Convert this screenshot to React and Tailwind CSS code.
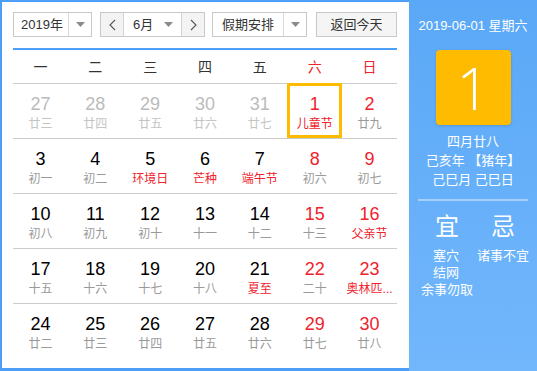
import React from "react";

const RED = "text-[#f0222c]";

const weeks = [
  [
    ["27", "廿三", "o"], ["28", "廿四", "o"], ["29", "廿五", "o"], ["30", "廿六", "o"], ["31", "廿七", "o"],
    ["1", "儿童节", "rf", true], ["2", "廿九", "r"],
  ],
  [
    ["3", "初一"], ["4", "初二"], ["5", "环境日", "f"], ["6", "芒种", "f"], ["7", "端午节", "f"],
    ["8", "初六", "r"], ["9", "初七", "r"],
  ],
  [
    ["10", "初八"], ["11", "初九"], ["12", "初十"], ["13", "十一"], ["14", "十二"],
    ["15", "十三", "r"], ["16", "父亲节", "rf"],
  ],
  [
    ["17", "十五"], ["18", "十六"], ["19", "十七"], ["20", "十八"], ["21", "夏至", "f"],
    ["22", "二十", "r"], ["23", "奥林匹...", "rf"],
  ],
  [
    ["24", "廿二"], ["25", "廿三"], ["26", "廿四"], ["27", "廿五"], ["28", "廿六"],
    ["29", "廿七", "r"], ["30", "廿八", "r"],
  ],
];

function Arrow() {
  return (
    <svg width="9" height="5" viewBox="0 0 9 5">
      <path d="M0 0 L9 0 L4.5 5 Z" fill="#8a8a8a" />
    </svg>
  );
}

function Chevron({ dir }) {
  return (
    <svg width="7" height="12" viewBox="0 0 7 12">
      <path
        d={dir === "l" ? "M6 1 L1 6 L6 11" : "M1 1 L6 6 L1 11"}
        fill="none"
        stroke="#555"
        strokeWidth="1.1"
      />
    </svg>
  );
}

function Cell({ d }) {
  const [num, lunar, kind = "", sel] = d;
  const other = kind.includes("o");
  const red = kind.includes("r");
  const fest = kind.includes("f");
  const numCls = other ? "text-[#bbbbbb]" : red ? RED : "text-black";
  const lunCls = other ? "text-[#c4c4c4]" : fest ? RED : "text-[#9a9a9a]";
  return (
    <div className="relative flex flex-col items-center pt-[10px] h-[54px]">
      {sel && (
        <div className="absolute -top-px left-0 right-0 bottom-0 border-[3px] border-[#ffbb00]" />
      )}
      <div className={`text-[18px] leading-[20px] ${numCls}`}>{num}</div>
      <div className={`text-[12px] leading-[16px] mt-[2px] whitespace-nowrap ${lunCls}`}>{lunar}</div>
    </div>
  );
}

export default function App() {
  return (
    <div
      className="w-[537px] h-[371px] flex overflow-hidden bg-white"
      style={{ fontFamily: '"Liberation Sans", "Noto Sans CJK SC", sans-serif' }}
    >
      <div className="w-[409px] h-full border-l-2 border-t-2 border-b-[3px] border-[#4d9ef6] pl-[11px] pr-[12px] pt-[10px] flex flex-col">
        {/* controls */}
        <div className="flex items-center h-[25px] text-[13px] text-[#333]">
          <div className="flex h-[25px] w-[79px] border border-[#c8c8c8]">
            <div className="flex-1 flex items-center pl-[7px]">2019年</div>
            <div className="w-[23px] border-l border-[#d8d8d8] flex items-center justify-center">
              <Arrow />
            </div>
          </div>
          <div className="flex h-[25px] w-[105px] border border-[#c8c8c8] ml-[8px]">
            <div className="w-[23px] bg-[#f3f3f3] border-r border-[#d4d4d4] flex items-center justify-center">
              <Chevron dir="l" />
            </div>
            <div className="flex-1 flex items-center justify-between pl-[9px] pr-[8px]">
              <span>6月</span>
              <Arrow />
            </div>
            <div className="w-[23px] bg-[#f3f3f3] border-l border-[#d4d4d4] flex items-center justify-center">
              <Chevron dir="r" />
            </div>
          </div>
          <div className="flex h-[25px] w-[95px] border border-[#c8c8c8] ml-[7px]">
            <div className="flex-1 flex items-center pl-[9px]">假期安排</div>
            <div className="w-[23px] border-l border-[#d8d8d8] flex items-center justify-center">
              <Arrow />
            </div>
          </div>
          <div className="ml-auto h-[25px] w-[81px] border border-[#c8c8c8] bg-[#f5f5f5] flex items-center justify-center">
            返回今天
          </div>
        </div>

        {/* blue line */}
        <div className="mt-[11px] h-[2px] bg-[#4d9ef6]" />

        {/* weekday header */}
        <div className="grid grid-cols-7 h-[33px] items-center text-[14px]">
          {["一", "二", "三", "四", "五"].map((w) => (
            <div key={w} className="text-center text-[#333] pt-[2px]">{w}</div>
          ))}
          <div className={`text-center pt-[2px] ${RED}`}>六</div>
          <div className={`text-center pt-[2px] ${RED}`}>日</div>
        </div>

        {/* weeks */}
        {weeks.map((wk, i) => (
          <div key={i} className="grid grid-cols-7 border-t border-[#cccccc]">
            {wk.map((d, j) => (
              <Cell key={j} d={d} />
            ))}
          </div>
        ))}
      </div>

      {/* right panel */}
      <div className="w-[128px] h-full bg-gradient-to-b from-[#5aa8f7] to-[#72b7fc] flex flex-col items-center text-white">
        <div className="mt-[18px] text-[13px] leading-[16px]">2019-06-01 星期六</div>
        <div className="mt-[16px] w-[75px] h-[75px] rounded-[4px] bg-[#ffbb00] shadow-[0_1px_3px_rgba(0,0,0,0.15)] flex items-center justify-center">
          <span className="text-[58px] font-light leading-none" style={{ fontFamily: '"Open Sans", "Liberation Sans", sans-serif', fontWeight: 300 }}>1</span>
        </div>
        <div className="mt-[7px] text-[13px] leading-[19px] text-center">四月廿八</div>
        <div className="text-[13px] leading-[19px] text-center">己亥年 【猪年】</div>
        <div className="text-[13px] leading-[19px] text-center">己巳月 己巳日</div>
        <div className="mt-[10px] w-[110px] h-[2px] bg-[#a6cffb]" />
        <div className="w-full flex mt-[12px] pl-[12px] pr-[4px]">
          <div className="w-[56px] flex flex-col">
            <div className="text-[24px] leading-[28px] pl-[14px]">宜</div>
            <div className="text-[13px] leading-[18px] mt-[6px] pl-[12px]">塞穴</div>
            <div className="text-[13px] leading-[18px] -mt-px pl-[12px]">结网</div>
            <div className="text-[13px] leading-[18px] -mt-px whitespace-nowrap">余事勿取</div>
          </div>
          <div className="flex flex-col">
            <div className="text-[24px] leading-[28px] pl-[14px]">忌</div>
            <div className="text-[13px] leading-[18px] mt-[6px] whitespace-nowrap">诸事不宜</div>
          </div>
        </div>
      </div>
    </div>
  );
}
